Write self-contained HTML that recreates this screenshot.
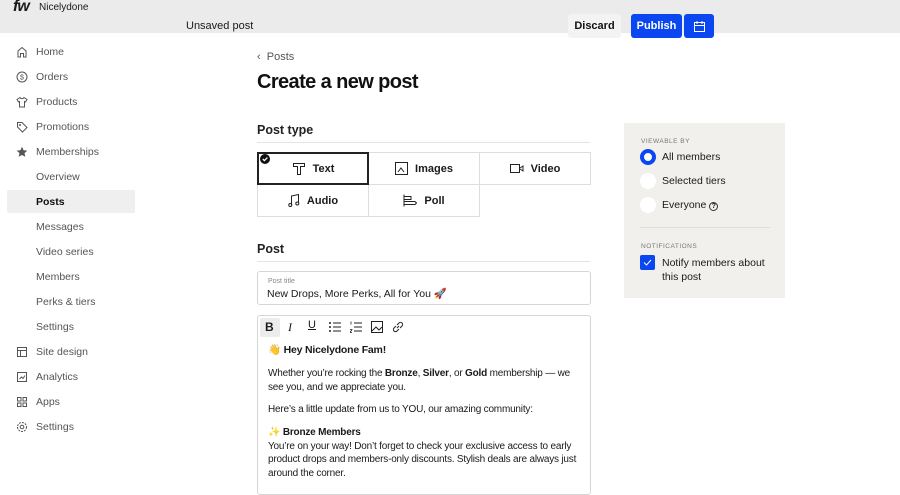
<!DOCTYPE html>
<html><head><meta charset="utf-8"><style>
*{box-sizing:border-box;margin:0;padding:0}
body{width:900px;height:484px;overflow:hidden;background:#fff;font-family:"Liberation Sans","Noto Sans CJK SC",sans-serif;color:#1a1a1a;position:relative}
.hdr{position:absolute;left:0;top:0;width:900px;height:33px;background:#ebebeb}
.abs{position:absolute}
.nav{position:absolute;left:36px;font-size:10.5px;color:#555}
.ic{position:absolute;left:16px;width:12px;height:12px}
.btn{position:absolute;font-size:11px;font-weight:bold;border-radius:3px;display:flex;align-items:center;justify-content:center;height:24px}
.cell{position:absolute;height:33px;border:1px solid #ddd;font-size:11px;font-weight:bold;display:flex;align-items:center;justify-content:center;gap:7px}
.p{font-size:10px;line-height:13.5px;position:absolute;left:268px;white-space:nowrap;letter-spacing:-0.2px}
.radio{position:absolute;left:640px;width:16px;height:16px;border-radius:50%;background:#fff}
.rl{position:absolute;left:662px;font-size:10.5px}
</style></head><body>
<div class="hdr"></div>
<div class="abs" style="left:13px;top:-2px;font-size:16px;font-weight:bold;font-style:italic;letter-spacing:-1px">fw</div>
<div class="abs" style="left:39px;top:2px;font-size:10px">Nicelydone</div>
<div class="abs" style="left:186px;top:20px;font-size:11px">Unsaved post</div>
<div class="btn" style="left:568px;top:14px;width:53px;background:#f3f3f3;color:#111">Discard</div>
<div class="btn" style="left:631px;top:14px;width:51px;background:#0a47f0;color:#fff">Publish</div>
<div class="btn" style="left:684px;top:14px;width:30px;background:#0a47f0;color:#fff">
<svg width="13" height="13" viewBox="0 0 13 13"><rect x="1.5" y="2.5" width="10" height="9" fill="none" stroke="#fff"/><path d="M1.5 5.5h10M4 1v3M9 1v3" stroke="#fff"/></svg></div>

<div class="abs" style="left:7px;top:190px;width:128px;height:23px;background:#efefef;border-radius:2px"></div>
<svg class="ic" style="top:46px" viewBox="0 0 12 12"><path d="M2 11V5l4-3.5L10 5v6H7.5V7.5h-3V11z" fill="none" stroke="#555"/></svg>
<div class="nav" style="top:46px">Home</div>
<svg class="ic" style="top:71px" viewBox="0 0 12 12"><circle cx="6" cy="6" r="5" fill="none" stroke="#555"/><text x="6" y="8.5" font-size="7" text-anchor="middle" fill="#555">$</text></svg>
<div class="nav" style="top:71px">Orders</div>
<svg class="ic" style="top:96px" viewBox="0 0 12 12"><path d="M4 1.5L1 3.5l1.5 2.5L3.5 5.5V11h5V5.5l1 .5L11 3.5 8 1.5C7.5 3 4.5 3 4 1.5z" fill="none" stroke="#555"/></svg>
<div class="nav" style="top:96px">Products</div>
<svg class="ic" style="top:121px" viewBox="0 0 12 12"><path d="M1.5 1.5h4.5l5 5-4.5 4.5-5-5z" fill="none" stroke="#555"/><circle cx="4" cy="4" r="1" fill="#555"/></svg>
<div class="nav" style="top:121px">Promotions</div>
<svg class="ic" style="top:146px" viewBox="0 0 12 12"><path d="M6 .8l1.6 3.4 3.7.4-2.8 2.5.8 3.7L6 9 2.7 10.8l.8-3.7L.7 4.6l3.7-.4z" fill="#555"/></svg>
<div class="nav" style="top:146px">Memberships</div>
<div class="nav" style="top:171px">Overview</div>
<div class="nav" style="top:196px;color:#111;font-weight:bold">Posts</div>
<div class="nav" style="top:221px">Messages</div>
<div class="nav" style="top:246px">Video series</div>
<div class="nav" style="top:271px">Members</div>
<div class="nav" style="top:296px">Perks &amp; tiers</div>
<div class="nav" style="top:321px">Settings</div>
<svg class="ic" style="top:346px" viewBox="0 0 12 12"><rect x="1.5" y="1.5" width="9" height="9" fill="none" stroke="#555"/><path d="M1.5 4.5h9M4.5 4.5v6" stroke="#555"/></svg>
<div class="nav" style="top:346px">Site design</div>
<svg class="ic" style="top:371px" viewBox="0 0 12 12"><rect x="1.5" y="1.5" width="9" height="9" fill="none" stroke="#555"/><path d="M3.5 8l2-2 1.5 1.5L9 4.5" fill="none" stroke="#555"/></svg>
<div class="nav" style="top:371px">Analytics</div>
<svg class="ic" style="top:396px" viewBox="0 0 12 12"><rect x="1.5" y="1.5" width="3.5" height="3.5" fill="none" stroke="#555"/><rect x="7" y="1.5" width="3.5" height="3.5" fill="none" stroke="#555"/><rect x="1.5" y="7" width="3.5" height="3.5" fill="none" stroke="#555"/><rect x="7" y="7" width="3.5" height="3.5" fill="none" stroke="#555"/></svg>
<div class="nav" style="top:396px">Apps</div>
<svg class="ic" style="top:421px" viewBox="0 0 12 12"><circle cx="6" cy="6" r="4.5" fill="none" stroke="#555" stroke-dasharray="2 1"/><circle cx="6" cy="6" r="1.8" fill="none" stroke="#555"/></svg>
<div class="nav" style="top:421px">Settings</div>

<div class="abs" style="left:257px;top:51px;font-size:11px;color:#555">‹&nbsp;&nbsp;Posts</div>
<div class="abs" style="left:257px;top:71px;font-size:20px;font-weight:bold;letter-spacing:-0.6px;color:#111">Create a new post</div>
<div class="abs" style="left:257px;top:123px;font-size:12.5px;font-weight:bold;color:#222">Post type</div>
<div class="abs" style="left:257px;top:142px;width:333px;height:1px;background:#e4e4e4"></div>
<div class="cell" style="left:257px;top:152px;width:112px;z-index:2;border:2px solid #222"><svg width="14" height="14" viewBox="0 0 14 14"><path d="M1.5 1.5h11v3h-4v8h-3v-8h-4z" fill="none" stroke="#222"/></svg>Text</div>
<div class="abs" style="left:260px;top:154px;width:10px;height:10px;border-radius:50%;background:#111;z-index:3"><svg width="10" height="10" style="display:block"><path d="M2.8 5l1.6 1.6L7.4 3.6" stroke="#fff" fill="none" stroke-width="1.3"/></svg></div>
<div class="cell" style="left:368px;top:152px;width:112px"><svg width="13" height="13"><rect x=".5" y=".5" width="12" height="12" fill="none" stroke="#222"/><path d="M3 10l3-4 3 4" fill="none" stroke="#222"/></svg>Images</div>
<div class="cell" style="left:479px;top:152px;width:112px"><svg width="14" height="11"><rect x=".5" y="1.5" width="9" height="8" fill="none" stroke="#222"/><path d="M10 5l3-2v5l-3-2" fill="none" stroke="#222"/></svg>Video</div>
<div class="cell" style="left:257px;top:184px;width:112px"><svg width="12" height="13"><path d="M3.5 11V2l7-1.5v8" fill="none" stroke="#222"/><circle cx="2.3" cy="11" r="1.5" fill="none" stroke="#222"/><circle cx="9.3" cy="9.5" r="1.5" fill="none" stroke="#222"/></svg>Audio</div>
<div class="cell" style="left:368px;top:184px;width:112px"><svg width="14" height="13"><path d="M1 .5v12M1 2.5h7v3H1M1 7.5h11l1.5 1.5-1.5 1.5H1" fill="none" stroke="#222"/></svg>Poll</div>
<div class="abs" style="left:257px;top:242px;font-size:12.5px;font-weight:bold;color:#222">Post</div>
<div class="abs" style="left:257px;top:261px;width:333px;height:1px;background:#e4e4e4"></div>
<div class="abs" style="left:257px;top:271px;width:334px;height:34px;border:1px solid #d6d6d6;border-radius:3px"></div>
<div class="abs" style="left:268px;top:278px;font-size:7px;color:#888">Post title</div>
<div class="abs" style="left:267px;top:287px;font-size:10.5px">New Drops, More Perks, All for You 🚀</div>
<div class="abs" style="left:257px;top:315px;width:334px;height:180px;border:1px solid #d6d6d6;border-radius:3px"></div>
<div class="abs" style="left:260px;top:318px;width:20px;height:19px;background:#ececec;border-radius:2px"></div>
<div class="abs" style="left:265px;top:320px;font-size:12px;font-weight:bold">B</div>
<div class="abs" style="left:288px;top:320px;font-size:12px;font-style:italic;font-family:'Liberation Serif',serif">I</div>
<div class="abs" style="left:308px;top:319px;font-size:11px;text-decoration:underline">U</div>
<svg class="abs" style="left:329px;top:321px" width="12" height="12"><path d="M4 2h8M4 6h8M4 10h8" stroke="#222"/><circle cx="1" cy="2" r="1" fill="#222"/><circle cx="1" cy="6" r="1" fill="#222"/><circle cx="1" cy="10" r="1" fill="#222"/></svg>
<svg class="abs" style="left:350px;top:321px" width="12" height="12"><path d="M4 2h8M4 6h8M4 10h8" stroke="#222"/><path d="M1 0.5v3M0 8.5h2l-2 3h2" stroke="#222" fill="none" stroke-width=".8"/></svg>
<svg class="abs" style="left:371px;top:321px" width="12" height="12"><rect x=".5" y=".5" width="11" height="11" fill="none" stroke="#222"/><path d="M1 10l4-4 3 3 3-3" fill="none" stroke="#222"/></svg>
<svg class="abs" style="left:392px;top:321px" width="12" height="12"><path d="M5 7l2-2M4 5L2 7a2 2 0 0 0 3 3l2-2M8 7l2-2a2 2 0 0 0-3-3L5 4" stroke="#222" fill="none"/></svg>
<div class="p" style="top:344px;font-weight:bold;font-size:10.5px">👋 Hey Nicelydone Fam!</div>
<div class="p" style="top:367px">Whether you’re rocking the <b>Bronze</b>, <b>Silver</b>, or <b>Gold</b> membership — we<br>see you, and we appreciate you.</div>
<div class="p" style="top:403px">Here’s a little update from us to YOU, our amazing community:</div>
<div class="p" style="top:426px">✨ <b>Bronze Members</b><br>You’re on your way! Don’t forget to check your exclusive access to early<br>product drops and members-only discounts. Stylish deals are always just<br>around the corner.</div>

<div class="abs" style="left:624px;top:123px;width:161px;height:175px;background:#f2f0ed"></div>
<div class="abs" style="left:641px;top:138px;font-size:6.5px;color:#777;letter-spacing:.5px">VIEWABLE BY</div>
<div class="radio" style="top:149px;border:4px solid #0a47f0"></div>
<div class="rl" style="top:151px">All members</div>
<div class="radio" style="top:173px"></div>
<div class="rl" style="top:175px">Selected tiers</div>
<div class="radio" style="top:197px"></div>
<div class="rl" style="top:199px">Everyone <span style="display:inline-block;width:9px;height:9px;border:1px solid #333;border-radius:50%;font-size:7px;line-height:8px;text-align:center;font-weight:bold">?</span></div>
<div class="abs" style="left:640px;top:227px;width:130px;height:1px;background:#ddd"></div>
<div class="abs" style="left:641px;top:243px;font-size:6.5px;color:#777;letter-spacing:.5px">NOTIFICATIONS</div>
<div class="abs" style="left:640px;top:255px;width:15px;height:15px;background:#0a47f0;border-radius:2px"><svg width="15" height="15" style="display:block"><path d="M4 7.5l2.5 2.5L11 5" stroke="#fff" fill="none"/></svg></div>
<div class="rl" style="top:256px;line-height:14px;width:110px">Notify members about this post</div>
</body></html>
